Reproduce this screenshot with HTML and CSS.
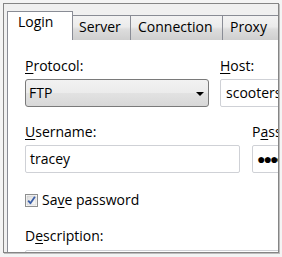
FILE: index.html
```html
<!DOCTYPE html>
<html>
<head>
<meta charset="utf-8">
<link rel="stylesheet" href="styles.css">
</head>
<body>
<div class="frame">
  <div class="tabstrip">
    <div class="tab active tab-login">Login</div>
    <div class="tab tab-server">Server</div>
    <div class="tab tab-conn">Connection</div>
    <div class="tab tab-proxy">Proxy</div>
  </div>
  <div class="panel">
    <div class="row row-labels">
      <div class="col col-protocol"><u>P</u>rotocol:</div>
      <div class="col"><u>H</u>ost:</div>
    </div>
    <div class="row row-fields">
      <div class="combo">
        <span>FTP</span>
        <span class="arrow"></span>
      </div>
      <div class="input input-host">scooters</div>
    </div>
    <div class="row row-labels row-labels2">
      <div class="col col-user"><u>U</u>sername:</div>
      <div class="col">P<u>a</u>ssword:</div>
    </div>
    <div class="row row-fields">
      <div class="input input-user">tracey</div>
      <div class="input input-pass">●●●●●●</div>
    </div>
    <div class="check-row">
      <svg class="checkbox" width="13" height="13" viewBox="0 0 13 13">
        <defs>
          <linearGradient id="cb" x1="0" y1="0" x2="1" y2="1">
            <stop offset="0" stop-color="#dcdcdc"/>
            <stop offset="1" stop-color="#fbfbfb"/>
          </linearGradient>
        </defs>
        <rect x="0.5" y="0.5" width="12" height="12" fill="#fff" stroke="#8e8f8f"/>
        <rect x="2" y="2" width="9" height="9" fill="url(#cb)" stroke="#c6c6c6" stroke-width="0.6"/>
        <path d="M3.2 6.6 L5.4 9.2 L9.9 2.8" fill="none" stroke="#3a5ea8" stroke-width="1.8" stroke-linejoin="round"/>
      </svg>
      <span>Sa<u>v</u>e password</span>
    </div>
    <div class="desc-label">D<u>e</u>scription:</div>
    <div class="textarea"></div>
  </div>
</div>
</body>
</html>
```

FILE: styles.css
```css
html, body {
  margin: 0;
  padding: 0;
}
body {
  background: #f4f4f4;
  width: 282px;
  height: 257px;
  overflow: hidden;
  font-family: "Open Sans", "Noto Sans", sans-serif;
  font-size: 14px;
  color: #000;
}
.frame {
  margin: 3px 0 0 3px;
  width: 271px;
  height: 241px;
  border: 1px solid #858585;
  box-shadow: 1px 1px 0 #bdbdbd;
  background: #f0f0f0;
  overflow: hidden;
  padding: 7px 0 0 3px;
  box-sizing: content-box;
  position: relative;
}
.tabstrip {
  display: flex;
  align-items: flex-end;
  height: 29px;
  margin-bottom: -1px;
  position: relative;
  z-index: 1;
}
.tab {
  box-sizing: border-box;
  height: 25px;
  border: 1px solid #898c95;
  border-bottom: none;
  margin-left: -1px;
  background: linear-gradient(#f3f3f3, #ebebeb 45%, #dddddd 55%, #cfcfcf);
  line-height: 21px;
  padding-left: 6px;
  white-space: nowrap;
  flex: none;
}
.tab.active {
  height: 29px;
  background: #fff;
  padding-left: 10px;
  margin-left: 0;
  line-height: 19px;
  position: relative;
  z-index: 2;
}
.tab-login { width: 66px; }
.tab-server { width: 59px; }
.tab-conn { width: 93px; padding-left: 7px; }
.tab-proxy { width: 70px; padding-left: 7px; }
.panel {
  width: 300px;
  height: 240px;
  border: 1px solid #898c95;
  background: #fff;
  box-sizing: border-box;
  padding: 16px 0 0 17px;
}
.row {
  display: flex;
}
.row > * {
  flex: none;
}
.row-labels {
  height: 19px;
  line-height: 19px;
  margin-bottom: 4px;
}
.row-labels2 {
  margin-top: 15px;
}
.col {
  white-space: nowrap;
}
.col-protocol { width: 195px; }
.col-user { width: 227px; }
u {
  text-decoration-thickness: 1px;
  text-underline-offset: 2px;
}
.combo {
  box-sizing: border-box;
  width: 184px;
  height: 28px;
  border: 1px solid #7a7a7a;
  border-radius: 3px;
  background: linear-gradient(#f2f2f2, #ebebeb 50%, #e2e2e2 50%, #d8d8d8);
  display: flex;
  align-items: center;
  justify-content: space-between;
  padding: 0 4px 0 3px;
  line-height: 20px;
}
.arrow {
  width: 0;
  height: 0;
  border-left: 4px solid transparent;
  border-right: 4px solid transparent;
  border-top: 4px solid #000;
  margin-top: 1px;
}
.input {
  box-sizing: border-box;
  height: 28px;
  border: 1px solid #cfd1d6;
  border-radius: 2px;
  background: #fff;
  padding: 0 4px;
  line-height: 26px;
  white-space: nowrap;
  overflow: hidden;
}
.input-host {
  margin-left: 11px;
  width: 90px;
  padding-left: 5px;
}
.input-user { width: 215px; }
.input-pass {
  margin-left: 12px;
  width: 60px;
  font-size: 14px;
  letter-spacing: -2px;
  padding-left: 4px;
}
.check-row {
  display: flex;
  align-items: center;
  height: 19px;
  margin-top: 17px;
  gap: 4px;
}
.checkbox {
  flex: none;
  margin-top: 1px;
}
.desc-label {
  height: 19px;
  line-height: 19px;
  margin-top: 17px;
}
.textarea {
  margin-top: 5px;
  width: 300px;
  height: 40px;
  border: 1px solid #cfd1d6;
  border-radius: 2px;
}
```
